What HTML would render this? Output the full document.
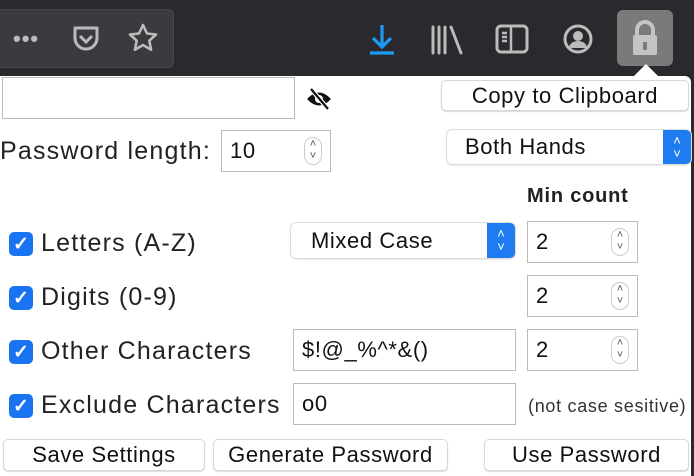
<!DOCTYPE html>
<html><head><style>
*{box-sizing:border-box;margin:0;padding:0}
body{width:694px;height:476px;background:#2a2a2e;font-family:"Liberation Sans",sans-serif;position:relative;overflow:hidden;color:#111}
.a{position:absolute}
.pop{left:0;top:76px;width:691px;height:400px;background:#fff;border-radius:0 6px 0 0}
.inp{position:absolute;border:1px solid #bbb;background:#fff;font-size:22px;letter-spacing:.6px;padding-left:8px;display:flex;align-items:center}
.btn{position:absolute;border:1px solid #d8d8d8;border-radius:5px;background:#fff;box-shadow:0 1px 1px rgba(0,0,0,.15);font-size:22px;letter-spacing:.6px;display:flex;align-items:center;justify-content:center}
.lbl{position:absolute;font-size:25px;letter-spacing:1.2px;color:#222}
.cb{position:absolute;width:24px;height:24px;border-radius:5px;background:#1a73f0;color:#fff;font-size:19px;display:flex;align-items:center;justify-content:center;font-weight:bold}
.sp{position:absolute;right:8px;top:50%;margin-top:-14px;width:18px;height:28px;border:1px solid #ccc;border-radius:9px;font-size:11px;color:#555;text-align:center;line-height:12px;letter-spacing:0}
.sel{position:absolute;border-radius:5px;background:#fff;box-shadow:0 0 0 1px #ddd,0 1px 2px rgba(0,0,0,.2);font-size:22px;letter-spacing:.6px;display:flex;align-items:center;padding-left:20px}
.sel .ar{position:absolute;right:0;top:0;bottom:0;width:28px;background:#1e7bf0;border-radius:0 5px 5px 0;color:#fff;font-size:13px;text-align:center;line-height:13px;padding-top:4px;letter-spacing:0}
</style></head><body>
<div class="a" style="left:-10px;top:9px;width:184px;height:59px;background:#3b3b3f;border-radius:6px;border:1px solid #48484c"></div>
<div class="a" style="left:13px;top:26px;font-size:22px;color:#bbb;letter-spacing:1px;font-weight:bold">•••</div>
<svg class="a" style="left:70px;top:22px" width="32" height="32" viewBox="0 0 32 32"><path d="M5 6h22v10a11 11 0 0 1-22 0z" fill="none" stroke="#bbb" stroke-width="3" stroke-linejoin="round"/><path d="M10 14l6 6 6-6" fill="none" stroke="#bbb" stroke-width="3"/></svg>
<svg class="a" style="left:127px;top:22px" width="32" height="32" viewBox="0 0 32 32"><path d="M16 3l4 8.5 9 1-6.7 6.2 1.8 9L16 23l-8.1 4.7 1.8-9L3 12.5l9-1z" fill="none" stroke="#bbb" stroke-width="2.6" stroke-linejoin="round"/></svg>
<svg class="a" style="left:366px;top:22px" width="32" height="34" viewBox="0 0 32 34"><path d="M16 3v21M7 16l9 9 9-9M4 31h24" fill="none" stroke="#1c9cf6" stroke-width="3.2"/></svg>
<svg class="a" style="left:430px;top:24px" width="36" height="32" viewBox="0 0 36 32"><path d="M3 3v26M9 3v26M15 3v26M21 3l10 26" stroke="#bbb" stroke-width="3" stroke-linecap="round"/></svg>
<svg class="a" style="left:495px;top:24px" width="34" height="30" viewBox="0 0 34 30"><rect x="2" y="2" width="30" height="26" rx="4" fill="none" stroke="#bbb" stroke-width="3"/><path d="M16 2v26M7 9h5M7 13h5M7 17h5" stroke="#bbb" stroke-width="2.5"/></svg>
<svg class="a" style="left:562px;top:23px" width="32" height="32" viewBox="0 0 32 32"><circle cx="16" cy="16" r="13" fill="none" stroke="#bbb" stroke-width="3"/><circle cx="16" cy="13" r="5" fill="#bbb"/><path d="M7 25a9 7 0 0 1 18 0" fill="#bbb"/></svg>
<div class="a" style="left:617px;top:10px;width:56px;height:56px;background:#7a7a7a;border-radius:6px"></div>
<svg class="a" style="left:628px;top:18px" width="34" height="40" viewBox="0 0 34 40"><path d="M9 18v-6a8 8 0 0 1 16 0v6" fill="none" stroke="#c4c4c4" stroke-width="4"/><rect x="5" y="17" width="24" height="20" rx="2" fill="#c4c4c4"/><rect x="15" y="24" width="4" height="8" fill="#7a7a7a"/></svg>
<div class="a pop"></div>
<div class="a" style="left:633px;top:64px;width:0;height:0;border-left:13px solid transparent;border-right:13px solid transparent;border-bottom:13px solid #fff"></div>
<div class="inp" style="left:2px;top:77px;width:293px;height:42px"></div>
<svg class="a" style="left:306px;top:87px" width="26" height="24" viewBox="0 0 26 24"><path d="M1 12Q13 -1 25 12Q13 25 1 12z" fill="#111"/><circle cx="13" cy="12" r="4" fill="#fff"/><path d="M5 2l17 20" stroke="#fff" stroke-width="4.5"/><path d="M5 2l17 20" stroke="#111" stroke-width="2.2"/></svg>
<div class="btn" style="left:441px;top:80px;width:248px;height:31px">Copy to Clipboard</div>
<div class="lbl" style="left:0;top:137px">Password length:</div>
<div class="inp" style="left:221px;top:130px;width:110px;height:42px">10<div class="sp">˄<br>˅</div></div>
<div class="sel" style="left:447px;top:130px;width:244px;height:34px;padding-left:18px">Both Hands<div class="ar">˄<br>˅</div></div>
<div class="a" style="left:527px;top:185px;font-size:20px;letter-spacing:.8px;font-weight:bold;color:#222">Min count</div>
<div class="cb" style="left:9px;top:232px">✓</div><div class="lbl" style="left:41px;top:229px">Letters (A-Z)</div>
<div class="sel" style="left:291px;top:223px;width:224px;height:35px">Mixed Case<div class="ar">˄<br>˅</div></div>
<div class="inp" style="left:527px;top:221px;width:111px;height:42px">2<div class="sp">˄<br>˅</div></div>
<div class="cb" style="left:9px;top:286px">✓</div><div class="lbl" style="left:41px;top:283px">Digits (0-9)</div>
<div class="inp" style="left:527px;top:275px;width:111px;height:42px">2<div class="sp">˄<br>˅</div></div>
<div class="cb" style="left:9px;top:340px">✓</div><div class="lbl" style="left:41px;top:337px">Other Characters</div>
<div class="inp" style="left:293px;top:329px;width:223px;height:42px">$!@_%^*&amp;()</div>
<div class="inp" style="left:527px;top:329px;width:111px;height:42px">2<div class="sp">˄<br>˅</div></div>
<div class="cb" style="left:9px;top:394px">✓</div><div class="lbl" style="left:41px;top:391px">Exclude Characters</div>
<div class="inp" style="left:293px;top:383px;width:223px;height:42px">o0</div>
<div class="a" style="left:528px;top:396px;font-size:18px;letter-spacing:.7px;color:#333">(not case sesitive)</div>
<div class="btn" style="left:3px;top:439px;width:202px;height:32px">Save Settings</div>
<div class="btn" style="left:213px;top:439px;width:235px;height:32px">Generate Password</div>
<div class="btn" style="left:484px;top:439px;width:205px;height:32px">Use Password</div>
</body></html>
